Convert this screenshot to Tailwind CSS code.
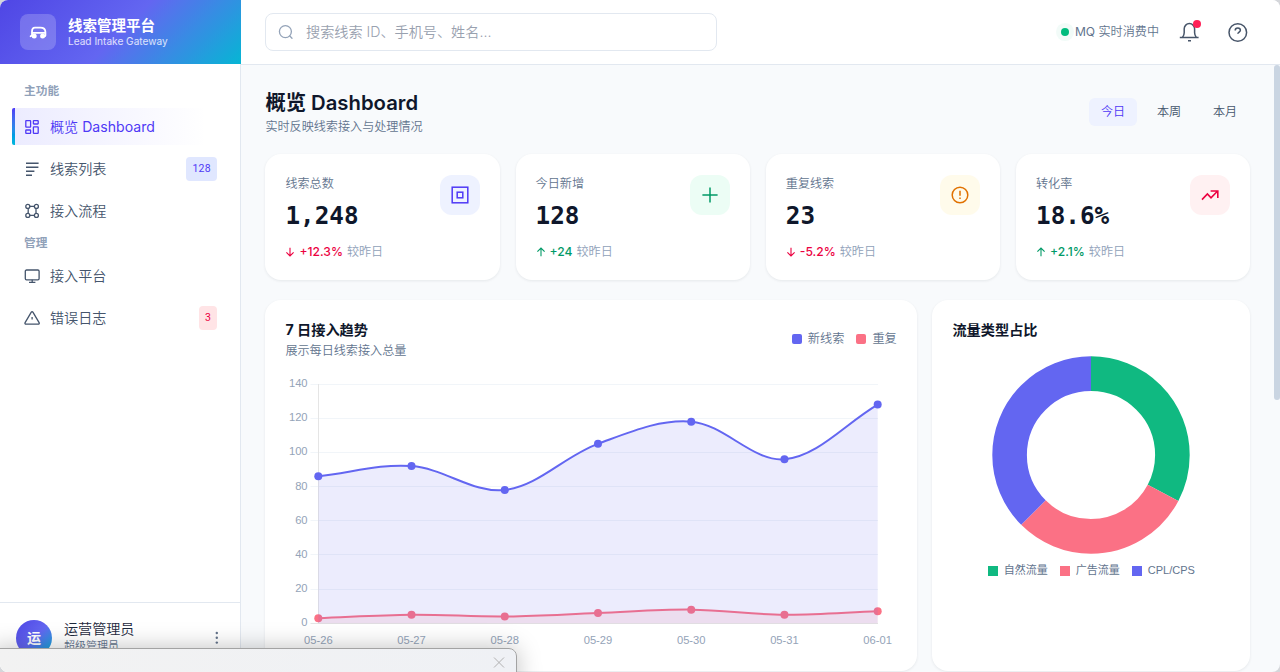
<!DOCTYPE html>
<html lang="zh-CN">
<head>
  <meta charset="UTF-8" />
  <title>线索管理平台</title>
  <script src="https://cdn.jsdelivr.net/npm/@tailwindcss/browser@4"></script>
</head>
<body class="bg-[#d4d6da]">
<div class="relative flex w-[1280px] h-[672px] overflow-hidden rounded-lg bg-slate-50 font-['Inter','Noto_Sans_CJK_SC',sans-serif] text-slate-600">

  <!-- Sidebar -->
  <aside class="w-[241px] shrink-0 flex flex-col bg-white">
    <div class="h-16 shrink-0 flex items-center gap-3 px-5 bg-[linear-gradient(135deg,#4f46e5_0%,#6366f1_50%,#06b6d4_100%)] text-white">
      <div class="size-9 rounded-lg bg-white/20 flex items-center justify-center">
        <svg class="size-[18px]" viewBox="0 0 18 18" fill="none" stroke="currentColor" stroke-width="1.8" stroke-linejoin="round" stroke-linecap="round">
          <path d="M1.6 13.2 3 12.4V8.8C3 6 4 4.6 6 4.6h5.4c3 0 5 1.6 5 4.4v3.4c0 .5-.2.8-.6.8M3.2 9.8h13" />
          <circle cx="5.2" cy="13" r="1.6" fill="currentColor" />
          <circle cx="13.6" cy="13" r="1.6" fill="currentColor" />
        </svg>
      </div>
      <div class="flex flex-col">
        <div class="text-[14.5px] leading-[18px] font-bold">线索管理平台</div>
        <div class="text-[10.1px] leading-[13px] text-white/80">Lead Intake Gateway</div>
      </div>
    </div>

    <nav class="flex-1 border-r border-slate-200 px-3 pt-[13px] text-[14.1px]">
      <div class="h-[27px] mb-1 px-3 pt-[2px] flex items-center text-[11.7px] font-semibold text-slate-400">主功能</div>
      <div class="flex flex-col gap-[5px]">
        <a class="h-[37px] flex items-stretch text-indigo-600">
          <span class="w-[3px] rounded-l-xs bg-linear-to-b from-indigo-600 to-cyan-500"></span>
          <span class="flex-1 flex items-center gap-2.5 pl-[9px] bg-linear-to-r from-indigo-500/12 to-transparent to-90%">
            <svg class="size-4" viewBox="0 0 16 16" fill="none" stroke="currentColor" stroke-width="1.3"><rect x="1.8" y="1.6" width="4.8" height="6.6" rx=".5"/><rect x="9.4" y="1.6" width="4.8" height="3.4" rx=".5"/><rect x="1.8" y="11" width="4.8" height="3.4" rx=".5"/><rect x="9.4" y="7.8" width="4.8" height="6.6" rx=".5"/></svg>
            <span class="font-[350]">概览 <span class="font-normal">Dashboard</span></span>
          </span>
        </a>
        <a class="h-[37px] flex items-center gap-2.5 px-3">
          <svg class="size-4" viewBox="0 0 16 16" fill="none" stroke="currentColor" stroke-width="1.4"><path d="M2 2.2h12.6M2 6.2h12.4M2 10.2h8.4M2 14.2h6"/></svg>
          <span class="font-[350]">线索列表</span>
          <span class="ml-auto -mr-px h-6 px-1.5 flex items-center rounded bg-indigo-100 text-indigo-600 text-[10.5px] font-['Roboto'] tracking-[0.3px]">128</span>
        </a>
        <a class="h-[37px] flex items-center gap-2.5 px-3">
          <svg class="size-4" viewBox="0 0 16 16" fill="none" stroke="currentColor" stroke-width="1.3"><circle cx="3.8" cy="3.4" r="2"/><circle cx="12.4" cy="3.4" r="2"/><circle cx="3.8" cy="12.4" r="2"/><circle cx="12.4" cy="12.4" r="2"/><path d="M5.8 3.4h4.6M5.8 12.4h4.6M4.2 5.4v5M12 5.4v5"/></svg>
          <span class="font-[350]">接入流程</span>
        </a>
      </div>
      <div class="h-[28px] px-3 pt-[2px] flex items-center text-[11.7px] font-semibold text-slate-400">管理</div>
      <div class="flex flex-col gap-[5px]">
        <a class="h-[37px] flex items-center gap-2.5 px-3">
          <svg class="size-4" viewBox="0 0 16 16" fill="none" stroke="currentColor" stroke-width="1.3"><rect x="1.3" y="2" width="13.8" height="9.8" rx="1.2"/><path d="M8.2 11.8v2.4M5 14.4h6.4"/></svg>
          <span class="font-[350]">接入平台</span>
        </a>
        <a class="h-[37px] flex items-center gap-2.5 px-3">
          <svg class="size-4" viewBox="0 0 16 16" fill="none" stroke="currentColor" stroke-width="1.3" stroke-linejoin="round"><path d="M7.3 2.2 1.1 12.6c-.4.7 0 1.6.9 1.6h12.2c.9 0 1.3-.9.9-1.6L8.9 2.2c-.4-.6-1.2-.6-1.6 0zM8.1 7v2.6"/></svg>
          <span class="font-[350]">错误日志</span>
          <span class="ml-auto -mr-px h-6 px-1.5 flex items-center rounded bg-rose-100 text-rose-600 text-[10.5px] font-['Roboto']">3</span>
        </a>
      </div>
    </nav>

    <div class="h-[70px] shrink-0 border-t border-r border-slate-200 flex items-center gap-3 px-4">
      <div class="size-9 shrink-0 rounded-full bg-[linear-gradient(135deg,#4f46e5_0%,#6366f1_50%,#06b6d4_100%)] text-white text-sm font-bold flex items-center justify-center">运</div>
      <div class="flex flex-col pb-px">
        <div class="text-[14.1px] leading-[18px] text-slate-800 font-[350]">运营管理员</div>
        <div class="text-[11px] leading-4 text-slate-500 font-[350]">超级管理员</div>
      </div>
      <svg class="ml-auto w-4 h-4" viewBox="0 0 16 16" fill="#64748b"><circle cx="8.8" cy="3" r="1.2"/><circle cx="8.8" cy="7.8" r="1.2"/><circle cx="8.8" cy="12.6" r="1.2"/></svg>
    </div>
  </aside>

  <div class="flex-1 flex flex-col min-w-0">
    <!-- Topbar -->
    <header class="h-[65px] shrink-0 flex items-center bg-white border-b border-slate-200 pl-6 pr-8">
      <div class="w-[452px] h-[38px] flex items-center gap-3 px-3 rounded-lg border border-slate-200 text-[14.15px] text-gray-400">
        <svg class="size-4" viewBox="0 0 16 16" fill="none" stroke="#94a3b8" stroke-width="1.3" stroke-linecap="round"><circle cx="7.4" cy="7.6" r="6"/><path d="m11.8 12 2.2 2.2"/></svg>
        <span class="font-[350]">搜索线索 ID、手机号、姓名...</span>
      </div>
      <div class="ml-auto flex items-center">
        <span class="size-2 rounded-full bg-emerald-500 ring-5 ring-emerald-500/5"></span>
        <span class="ml-1.5 mr-5 pt-px text-[12.1px] text-slate-500 font-[350]"><span class="font-normal">MQ</span> 实时消费中</span>
        <div class="relative">
          <svg class="size-5" viewBox="0 0 20 20" fill="none" stroke="#475569" stroke-width="1.5"><path d="M.8 15.6h18.8M3.4 15.4c1.2-1.4 1.8-2.6 1.8-4.6V6.8a5.2 5.2 0 0 1 10.4 0v4c0 2 .6 3.2 1.8 4.6M9 18.8h3"/></svg>
          <span class="absolute -top-[2px] right-[-2px] size-2 rounded-full bg-rose-500"></span>
        </div>
        <svg class="ml-7 size-[21px]" viewBox="0 0 21 21" fill="none" stroke="#475569" stroke-width="1.5"><circle cx="10.8" cy="10.5" r="8.8"/><path d="M8.2 8.4c0-1.5 1.1-2.4 2.6-2.4s2.6 1 2.6 2.3c0 1.6-2.6 1.9-2.6 3.5"/></svg>
      </div>
    </header>

    <div class="flex flex-1 min-h-0">
      <main class="flex-1 pl-[24.4px] pr-[23.8px] pt-[26px]">
        <div class="h-[49px] flex items-start justify-between">
          <div>
            <h1 class="text-[20.3px] leading-6 font-semibold text-slate-900"><span class="font-bold">概览</span> Dashboard</h1>
            <p class="pt-px text-[12.1px] leading-[22px] text-slate-500 font-[350]">实时反映线索接入与处理情况</p>
          </div>
          <div class="mt-[7px] mr-[1.2px] flex gap-2 text-[12.1px] font-[350]">
            <span class="w-12 h-7 flex items-center justify-center rounded-md bg-indigo-50 text-indigo-600">今日</span>
            <span class="w-12 h-7 flex items-center justify-center">本周</span>
            <span class="w-12 h-7 flex items-center justify-center">本月</span>
          </div>
        </div>

        <!-- Stat cards -->
        <div class="mt-[14px] grid grid-cols-4 gap-4">
          <div class="h-[126px] p-5 flex justify-between rounded-2xl bg-white shadow-[0_1px_3px_rgba(15,23,42,0.08)]">
            <div class="pt-px">
              <div class="text-[12.1px] leading-[18px] text-slate-500 font-[350]">线索总数</div>
              <div class="mt-[5px] text-[24.3px] leading-9 font-bold text-slate-900 font-['DejaVu_Sans_Mono']">1,248</div>
              <div class="mt-[9px] flex items-center gap-1 text-[12.1px] leading-[18px] font-medium text-rose-600">
                <svg class="size-2.5" viewBox="0 0 10 10" fill="none" stroke="currentColor" stroke-width="1.1"><path d="M5 .8v8M1.4 5.4 5 9l3.6-3.6"/></svg>+12.3%<span class="font-[350] text-slate-400">较昨日</span>
              </div>
            </div>
            <div class="size-10 mt-px rounded-xl bg-indigo-50 text-indigo-600 flex items-center justify-center">
              <svg class="size-5" viewBox="0 0 20 20" fill="none" stroke="currentColor" stroke-width="1.5"><rect x="2.2" y="2.2" width="15.6" height="15.6"/><rect x="7.2" y="7.2" width="5.6" height="5.6"/></svg>
            </div>
          </div>
          <div class="h-[126px] p-5 flex justify-between rounded-2xl bg-white shadow-[0_1px_3px_rgba(15,23,42,0.08)]">
            <div class="pt-px">
              <div class="text-[12.1px] leading-[18px] text-slate-500 font-[350]">今日新增</div>
              <div class="mt-[5px] text-[24.3px] leading-9 font-bold text-slate-900 font-['DejaVu_Sans_Mono']">128</div>
              <div class="mt-[9px] flex items-center gap-1 text-[12.1px] leading-[18px] font-medium text-emerald-600">
                <svg class="size-2.5" viewBox="0 0 10 10" fill="none" stroke="currentColor" stroke-width="1.1"><path d="M5 9.2V1.2M1.4 4.6 5 1l3.6 3.6"/></svg>+24<span class="font-[350] text-slate-400">较昨日</span>
              </div>
            </div>
            <div class="size-10 mt-px rounded-xl bg-emerald-50 text-emerald-600 flex items-center justify-center">
              <svg class="size-5" viewBox="0 0 20 20" fill="none" stroke="currentColor" stroke-width="1.5"><path d="M10 2.4v15.2M2.4 10h15.2"/></svg>
            </div>
          </div>
          <div class="h-[126px] p-5 flex justify-between rounded-2xl bg-white shadow-[0_1px_3px_rgba(15,23,42,0.08)]">
            <div class="pt-px">
              <div class="text-[12.1px] leading-[18px] text-slate-500 font-[350]">重复线索</div>
              <div class="mt-[5px] text-[24.3px] leading-9 font-bold text-slate-900 font-['DejaVu_Sans_Mono']">23</div>
              <div class="mt-[9px] flex items-center gap-1 text-[12.1px] leading-[18px] font-medium text-rose-600">
                <svg class="size-2.5" viewBox="0 0 10 10" fill="none" stroke="currentColor" stroke-width="1.1"><path d="M5 .8v8M1.4 5.4 5 9l3.6-3.6"/></svg>-5.2%<span class="font-[350] text-slate-400">较昨日</span>
              </div>
            </div>
            <div class="size-10 mt-px rounded-xl bg-amber-50 text-amber-600 flex items-center justify-center">
              <svg class="size-5" viewBox="0 0 20 20" fill="none" stroke="currentColor" stroke-width="1.5"><circle cx="10" cy="10" r="7.8"/><path d="M10 5.8v5M10 12.6v1.4"/></svg>
            </div>
          </div>
          <div class="h-[126px] p-5 flex justify-between rounded-2xl bg-white shadow-[0_1px_3px_rgba(15,23,42,0.08)]">
            <div class="pt-px">
              <div class="text-[12.1px] leading-[18px] text-slate-500 font-[350]">转化率</div>
              <div class="mt-[5px] text-[24.3px] leading-9 font-bold text-slate-900 font-['DejaVu_Sans_Mono']">18.6%</div>
              <div class="mt-[9px] flex items-center gap-1 text-[12.1px] leading-[18px] font-medium text-emerald-600">
                <svg class="size-2.5" viewBox="0 0 10 10" fill="none" stroke="currentColor" stroke-width="1.1"><path d="M5 9.2V1.2M1.4 4.6 5 1l3.6 3.6"/></svg>+2.1%<span class="font-[350] text-slate-400">较昨日</span>
              </div>
            </div>
            <div class="size-10 mt-px rounded-xl bg-[#fff1f2] text-rose-600 flex items-center justify-center">
              <svg class="size-5" viewBox="0 0 20 20" fill="none" stroke="currentColor" stroke-width="1.6"><path d="m2 14.6 5.4-5.6 3.6 3.8 6.4-6.6M10.6 6h7.2v7"/></svg>
            </div>
          </div>
        </div>

        <!-- Charts -->
        <div class="mt-5 h-[371px] grid grid-cols-[651.4px_1fr] gap-[15.6px]">
          <section class="px-5 pt-5 rounded-2xl bg-white shadow-[0_1px_3px_rgba(15,23,42,0.08)]">
            <div class="h-[50px] flex justify-between items-start">
              <div>
                <h2 class="text-[14.2px] leading-5 font-bold text-slate-900">7 日接入趋势</h2>
                <p class="pt-px text-[12.1px] leading-5 text-slate-500 font-[350]">展示每日线索接入总量</p>
              </div>
              <div class="h-[39px] flex items-center gap-3 text-[12.2px] text-slate-500 font-[350]">
                <span class="flex items-center gap-1.5"><i class="size-2.5 rounded-xs bg-[#6366f1]"></i>新线索</span>
                <span class="flex items-center gap-1.5"><i class="size-2.5 rounded-xs bg-[#fb7185]"></i>重复</span>
              </div>
            </div>
            <svg id="trend" class="block w-[611px] h-[290px] font-['Liberation_Sans'] overflow-visible" viewBox="0 0 611 290" font-size="11.2" fill="#94a3b8"></svg>
          </section>

          <section class="px-5 pt-5 flex flex-col items-center rounded-2xl bg-white shadow-[0_1px_3px_rgba(15,23,42,0.08)]">
            <h2 class="w-full text-[14.2px] leading-5 font-bold text-slate-900">流量类型占比</h2>
            <svg class="mt-[15px] w-[200px] h-[200px]" viewBox="0 0 200 200" fill="none" stroke-width="34.6">
              <g transform="rotate(-90 100 100)">
                <circle cx="100" cy="100" r="81.4" pathLength="360" stroke="#10b981" stroke-dasharray="117.8 360"/>
                <circle cx="100" cy="100" r="81.4" pathLength="360" stroke="#fb7185" stroke-dasharray="107.2 360" stroke-dashoffset="-117.8"/>
                <circle cx="100" cy="100" r="81.4" pathLength="360" stroke="#6366f1" stroke-dasharray="135 360" stroke-dashoffset="-225"/>
              </g>
            </svg>
            <div class="mt-[7px] flex gap-3 text-[11px] leading-4 text-slate-500 font-['Liberation_Sans','Noto_Sans_CJK_SC',sans-serif]">
              <span class="flex items-center gap-1.5"><i class="size-2.5 mt-px bg-[#10b981]"></i>自然流量</span>
              <span class="flex items-center gap-1.5"><i class="size-2.5 mt-px bg-[#fb7185]"></i>广告流量</span>
              <span class="flex items-center gap-1.5"><i class="size-2.5 mt-px bg-[#6366f1]"></i>CPL/CPS</span>
            </div>
          </section>
        </div>
      </main>
      <!-- Scrollbar -->
      <div class="w-1.5 shrink-0"><div class="h-[335px] rounded-full bg-slate-300"></div></div>
    </div>
  </div>

  <!-- Overlapping window -->
  <div class="absolute -left-2 top-[648px] w-[525px] h-10 flex justify-end pr-[11px] pt-2 rounded-tr-lg border border-[#a3a3a3] bg-linear-to-r from-[#f2f2f2] to-[#eff1f5] shadow-[0_0_24px_rgba(0,0,0,0.25)]">
    <svg class="size-3" viewBox="0 0 12 12" fill="none" stroke="#b0b0b0" stroke-width="1"><path d="m1 .5 10 10M11 .5l-10 10"/></svg>
  </div>
</div>

<script>
  const leads = [86, 92, 78, 105, 118, 96, 128];
  const dupes = [3, 5, 4, 6, 8, 5, 7];
  const days = ['05-26', '05-27', '05-28', '05-29', '05-30', '05-31', '06-01'];
  const X = i => 33.3 + i * 93.23;
  const Y = v => 253.3 - v * 1.709;

  // cubic spline with tension, control points weighted by neighbour distance
  function spline(data) {
    const p = data.map((v, i) => [X(i), Y(v)]);
    const dist = (a, b) => Math.hypot(a[0] - b[0], a[1] - b[1]);
    const cps = p.map((c, i) => {
      const a = p[i - 1] || c, b = p[i + 1] || c;
      const d1 = dist(a, c), d2 = dist(c, b);
      const f1 = 0.35 * d1 / (d1 + d2), f2 = 0.35 * d2 / (d1 + d2);
      return [
        [c[0] - f1 * (b[0] - a[0]), c[1] - f1 * (b[1] - a[1])],
        [c[0] + f2 * (b[0] - a[0]), c[1] + f2 * (b[1] - a[1])],
      ];
    });
    let d = `M${p[0]}`;
    for (let i = 1; i < p.length; i++) d += `C${cps[i - 1][1]} ${cps[i][0]} ${p[i]}`;
    return d;
  }

  function series(data, color, fill) {
    const d = spline(data);
    return [
      `<path d="${d}L${X(6)},${Y(0)}L${X(0)},${Y(0)}Z" fill="${fill}"/>`,
      `<path d="${d}" fill="none" stroke="${color}" stroke-width="2"/>` +
        data.map((v, i) => `<circle cx="${X(i)}" cy="${Y(v)}" r="4" fill="${color}"/>`).join(''),
    ];
  }

  let out = '';
  for (let v = 0; v <= 140; v += 20) {
    const y = Math.floor(Y(v)) + 0.5;
    out += `<path d="M25.5 ${y}H593" stroke="${v ? '#f1f5f9' : '#e5e5e5'}"/>`;
    out += `<text x="22.6" y="${Y(v) + 3}" text-anchor="end">${v}</text>`;
  }
  out += `<path d="M33.5 14V254" stroke="#e5e5e5"/>`;
  days.forEach((t, i) => out += `<text x="${X(i)}" y="274" text-anchor="middle">${t}</text>`);
  const a = series(dupes, '#fb7185', 'rgba(251,113,133,0.12)');
  const b = series(leads, '#6366f1', 'rgba(99,102,241,0.12)');
  out += a[0] + a[1] + b[0] + b[1];
  document.getElementById('trend').innerHTML = out;
</script>
</body>
</html>
